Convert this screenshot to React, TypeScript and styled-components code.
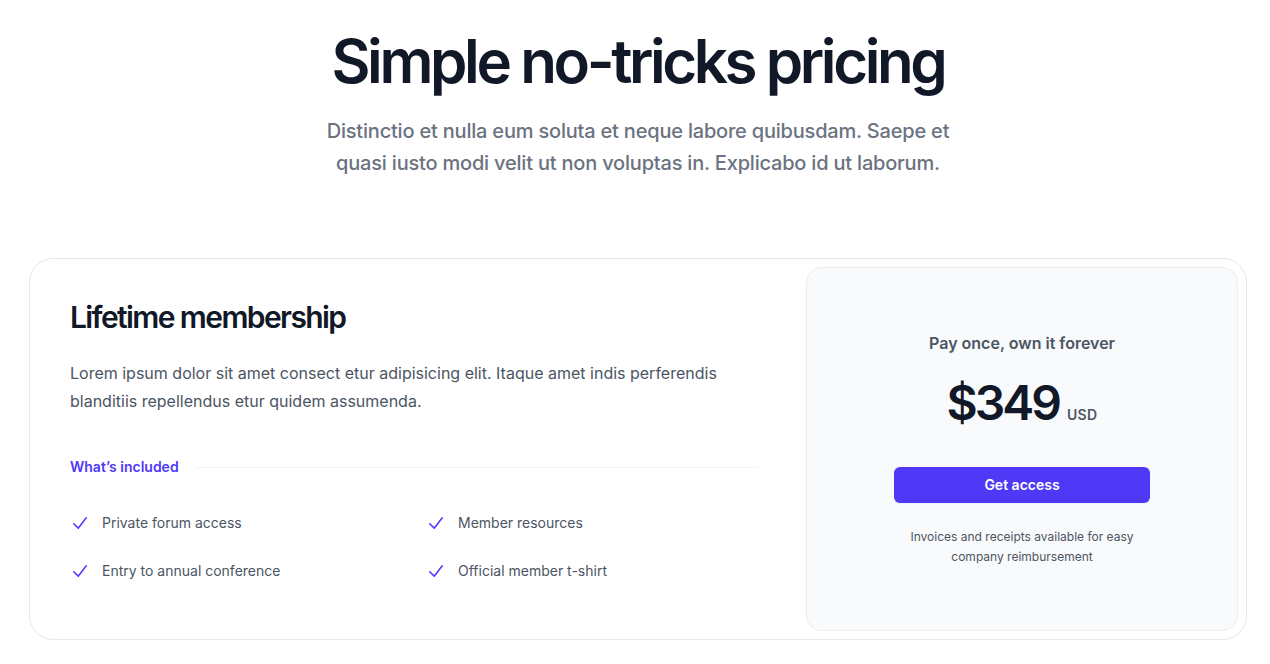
import styled, { createGlobalStyle } from 'styled-components';

const GlobalStyle = createGlobalStyle`
  * { box-sizing: border-box; }
  body {
    margin: 0;
    background: #ffffff;
    font-family: Inter, "Noto Sans", "Liberation Sans", sans-serif;
    -webkit-font-smoothing: antialiased;
  }
`;

const Page = styled.div`
  padding: 31px 23px 40px 29px;
`;

const Header = styled.div`
  max-width: 672px;
  margin: 0 auto;
  text-align: center;
`;

const Title = styled.h2`
  margin: 0;
  font-size: 60px;
  line-height: 60px;
  font-weight: 600;
  letter-spacing: -3.4px;
  color: #111827;
`;

const Lead = styled.p`
  margin: 24px 0 0;
  font-size: 20px;
  line-height: 32px;
  font-weight: 500;
  letter-spacing: -0.2px;
  color: #6b7280;
`;

const Card = styled.div`
  margin-top: 79px;
  display: flex;
  border: 1px solid #e5e7eb;
  border-radius: 24px;
`;

const Details = styled.div`
  flex: 1;
  padding: 40px;
`;

const PlanName = styled.h3`
  margin: 0;
  font-size: 30px;
  line-height: 36px;
  font-weight: 600;
  letter-spacing: -1.6px;
  color: #111827;
`;

const Description = styled.p`
  margin: 24px 0 0;
  font-size: 16px;
  line-height: 28px;
  color: #4b5563;
`;

const IncludedRow = styled.div`
  margin-top: 40px;
  display: flex;
  align-items: center;
  gap: 16px;
`;

const IncludedLabel = styled.h4`
  margin: 0;
  flex: none;
  font-size: 14px;
  line-height: 24px;
  font-weight: 600;
  color: #4f39f6;
`;

const Divider = styled.div`
  flex: 1;
  height: 1px;
  background: #f3f4f6;
`;

const Features = styled.ul`
  list-style: none;
  margin: 32px 0 0;
  padding: 0;
  display: grid;
  grid-template-columns: 1fr 1fr;
  gap: 24px;
  font-size: 14px;
  line-height: 24px;
  color: #4b5563;
`;

const Feature = styled.li`
  display: flex;
  gap: 12px;
`;

const CheckIcon = styled.svg`
  width: 20px;
  height: 24px;
  flex: none;
  color: #4f39f6;
`;

const PriceWrap = styled.div`
  width: 448px;
  flex: none;
  padding: 8px;
`;

const PricePanel = styled.div`
  height: 100%;
  border-radius: 16px;
  background: #f9fafb;
  box-shadow: inset 0 0 0 1px rgba(17, 24, 39, 0.05);
  padding: 64px 0;
  text-align: center;
  display: flex;
  flex-direction: column;
  justify-content: center;
`;

const PriceInner = styled.div`
  max-width: 320px;
  margin: 0 auto;
  padding: 0 32px;
`;

const PayOnce = styled.p`
  margin: 0;
  font-size: 16px;
  line-height: 24px;
  font-weight: 600;
  color: #4b5563;
`;

const PriceLine = styled.p`
  margin: 24px 0 0;
  display: flex;
  align-items: baseline;
  justify-content: center;
  gap: 8px;
`;

const Amount = styled.span`
  font-size: 48px;
  line-height: 48px;
  font-weight: 600;
  letter-spacing: -3px;
  color: #111827;
`;

const Currency = styled.span`
  font-size: 14px;
  line-height: 24px;
  font-weight: 600;
  letter-spacing: 0.35px;
  color: #4b5563;
`;

const AccessButton = styled.a`
  display: block;
  margin-top: 40px;
  width: 100%;
  padding: 8px 12px;
  border-radius: 6px;
  background: #4f39f6;
  color: #ffffff;
  font-size: 14px;
  line-height: 20px;
  font-weight: 600;
  text-decoration: none;
  box-shadow: 0 1px 2px rgba(0, 0, 0, 0.05);
`;

const Note = styled.p`
  margin: 24px 0 0;
  font-size: 12px;
  line-height: 20px;
  color: #4b5563;
`;

const features = [
  'Private forum access',
  'Member resources',
  'Entry to annual conference',
  'Official member t-shirt',
];

const Check = () => (
  <CheckIcon viewBox="0 0 20 20" fill="currentColor" aria-hidden="true">
    <path
      fillRule="evenodd"
      clipRule="evenodd"
      d="M16.704 4.153a.75.75 0 0 1 .143 1.052l-8 10.5a.75.75 0 0 1-1.127.075l-4.5-4.5a.75.75 0 0 1 1.06-1.06l3.894 3.893 7.48-9.817a.75.75 0 0 1 1.05-.143Z"
    />
  </CheckIcon>
);

export default function App() {
  return (
    <>
      <GlobalStyle />
      <Page>
        <Header>
          <Title>Simple no-tricks pricing</Title>
          <Lead>
            Distinctio et nulla eum soluta et neque labore quibusdam. Saepe et quasi iusto modi velit ut
            non voluptas in. Explicabo id ut laborum.
          </Lead>
        </Header>
        <Card>
          <Details>
            <PlanName>Lifetime membership</PlanName>
            <Description>
              Lorem ipsum dolor sit amet consect etur adipisicing elit. Itaque amet indis perferendis
              blanditiis repellendus etur quidem assumenda.
            </Description>
            <IncludedRow>
              <IncludedLabel>What’s included</IncludedLabel>
              <Divider />
            </IncludedRow>
            <Features>
              {features.map((f) => (
                <Feature key={f}>
                  <Check />
                  {f}
                </Feature>
              ))}
            </Features>
          </Details>
          <PriceWrap>
            <PricePanel>
              <PriceInner>
                <PayOnce>Pay once, own it forever</PayOnce>
                <PriceLine>
                  <Amount>$349</Amount>
                  <Currency>USD</Currency>
                </PriceLine>
                <AccessButton href="#">Get access</AccessButton>
                <Note>Invoices and receipts available for easy company reimbursement</Note>
              </PriceInner>
            </PricePanel>
          </PriceWrap>
        </Card>
      </Page>
    </>
  );
}
